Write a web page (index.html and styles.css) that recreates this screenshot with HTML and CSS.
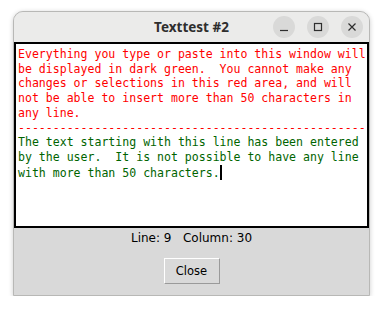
FILE: index.html
```html
<!DOCTYPE html>
<html lang="en">
<head>
    <meta charset="UTF-8">
    <title>Texttest #2</title>
    <link rel="stylesheet" href="styles.css">
</head>
<body>
    <div class="window">
        <div class="titlebar">
            <span class="title">Texttest #2</span>
            <div class="controls">
                <span class="ctl">
                    <svg width="10" height="10" viewBox="0 0 10 10"><path d="M1 8.5h8" stroke="#2e2e2e" stroke-width="1.2"/></svg>
                </span>
                <span class="ctl">
                    <svg width="10" height="10" viewBox="0 0 10 10"><rect x="1.5" y="1.5" width="7" height="7" fill="none" stroke="#2e2e2e" stroke-width="1.2"/></svg>
                </span>
                <span class="ctl">
                    <svg width="10" height="10" viewBox="0 0 10 10"><path d="M1.5 1.5l7 7M8.5 1.5l-7 7" stroke="#2e2e2e" stroke-width="1.2"/></svg>
                </span>
            </div>
        </div>
        <div class="textbox">
<pre class="red">Everything you type or paste into this window will
be displayed in dark green.  You cannot make any
changes or selections in this red area, and will
not be able to insert more than 50 characters in
any line.
--------------------------------------------------</pre>
<pre class="green">The text starting with this line has been entered
by the user.  It is not possible to have any line
with more than 50 characters.<span class="cursor"></span></pre>
        </div>
        <div class="status">Line: 9   Column: 30</div>
        <div class="buttons">
            <button class="close-btn">Close</button>
        </div>
    </div>
</body>
</html>
```
FILE: styles.css
```css
body {
    margin: 0;
    background: #ffffff;
    font-family: 'DejaVu Sans', sans-serif;
}

.window {
    margin: 11px 0 0 13px;
    width: 357px;
    height: 285px;
    box-sizing: border-box;
    background: #d9d9d9;
    border: 1px solid #b8b8b6;
    border-radius: 10px 10px 0 0;
    box-shadow: 0 1px 5px rgba(0,0,0,0.2);
    display: flex;
    flex-direction: column;
}

.titlebar {
    height: 30px;
    background: #ebebea;
    border-radius: 9px 9px 0 0;
    display: flex;
    align-items: center;
    justify-content: center;
    position: relative;
}

.title {
    font-family: 'Noto Sans', sans-serif;
    font-weight: bold;
    font-size: 13.5px;
    color: #2e2e2e;
}

.controls {
    position: absolute;
    right: 6px;
    top: 4px;
    display: flex;
    gap: 12px;
}

.ctl {
    width: 22px;
    height: 22px;
    border-radius: 50%;
    background: #d9d9d8;
    display: flex;
    align-items: center;
    justify-content: center;
}

.textbox {
    height: 186px;
    box-sizing: border-box;
    background: #ffffff;
    border: 2px solid #000000;
    padding: 3px 2px;
}

.textbox pre {
    margin: 0;
    font-family: 'DejaVu Sans Mono', monospace;
    font-size: 11.55px;
    line-height: 14.7px;
}

.red {
    color: #ff0000;
}

.green {
    color: #006400;
}

.cursor {
    display: inline-block;
    width: 2px;
    height: 15px;
    background: #000000;
    vertical-align: -3px;
}

.status {
    white-space: pre;
    text-align: center;
    font-size: 12px;
    color: #000000;
    margin-top: 3px;
}

.buttons {
    display: flex;
    justify-content: center;
    margin-top: 13px;
}

.close-btn {
    width: 56px;
    height: 26px;
    background: #d9d9d9;
    border: 1px solid;
    border-color: #ffffff #9a9a9a #9a9a9a #ffffff;
    font-family: 'DejaVu Sans', sans-serif;
    font-size: 11.5px;
    color: #000000;
    padding: 0;
}
```
